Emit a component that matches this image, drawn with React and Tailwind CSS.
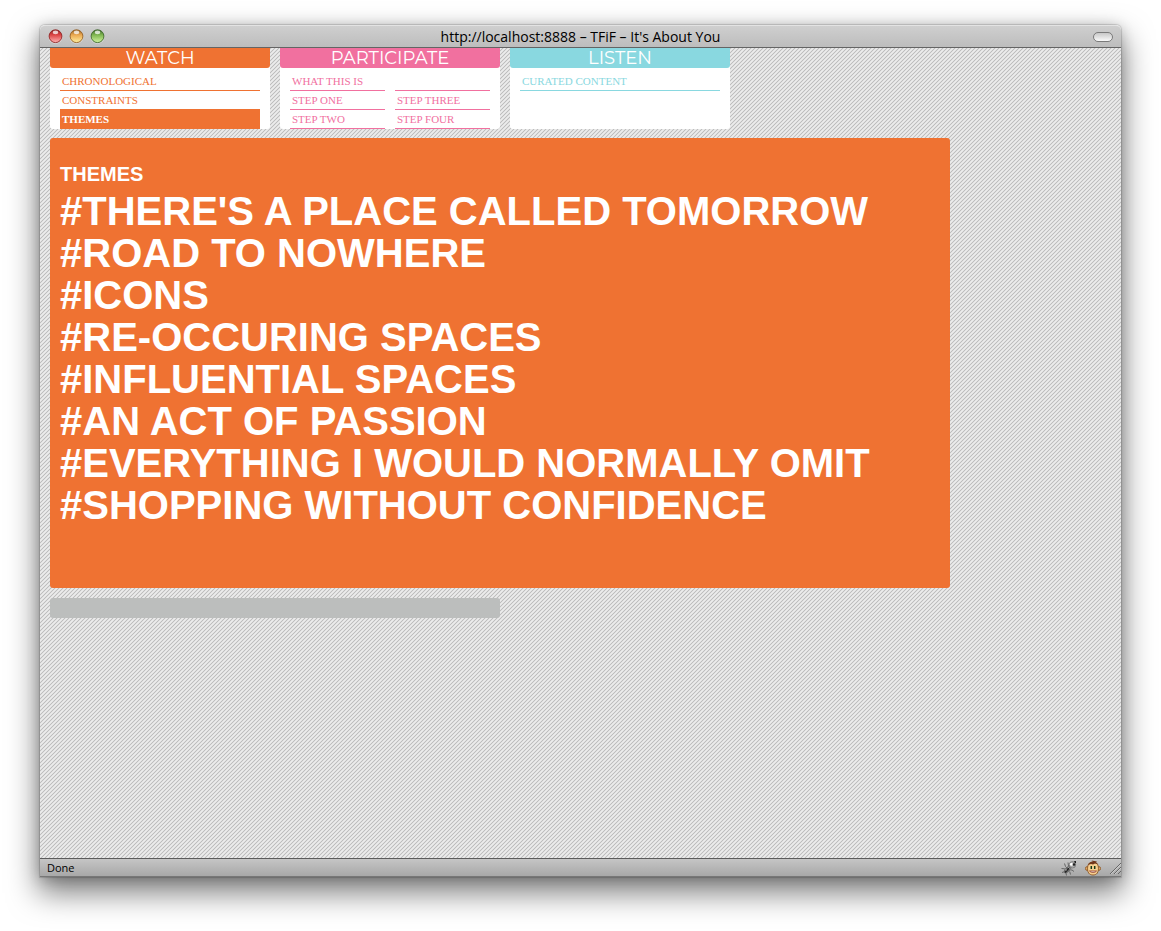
import React from 'react';

const themes = [
  "#THERE'S A PLACE CALLED TOMORROW",
  '#ROAD TO NOWHERE',
  '#ICONS',
  '#RE-OCCURING SPACES',
  '#INFLUENTIAL SPACES',
  '#AN ACT OF PASSION',
  '#EVERYTHING I WOULD NORMALLY OMIT',
  '#SHOPPING WITHOUT CONFIDENCE',
];

function WindowButton({ label, id, edge, dark, light }) {
  return (
    <button type="button" aria-label={label} className="block size-[15px]">
      <svg viewBox="0 0 15 15" className="block size-full">
        <defs>
          <linearGradient id={id} x1="0" y1="0" x2="0" y2="1">
            <stop offset="0" stopColor={edge} />
            <stop offset="0.4" stopColor={dark} />
            <stop offset="1" stopColor={light} />
          </linearGradient>
        </defs>
        <circle cx="7.5" cy="7.9" r="6.9" fill="#f0f0f0" opacity="0.6" />
        <circle cx="7.5" cy="7.2" r="6.4" fill={`url(#${id})`} stroke={edge} strokeWidth="0.9" />
        <ellipse cx="7.5" cy="3.4" rx="2.8" ry="1.8" fill="#fff" opacity="0.75" />
      </svg>
    </button>
  );
}

function Panel({ title, head, children }) {
  return (
    <section className="h-[81px] w-[220px] shrink-0 rounded-b-[3px] bg-white">
      <h2 className={`h-5 rounded-b-[3px] text-center font-['Montserrat','Lato',sans-serif] text-[18px] leading-5 text-white ${head}`}>
        {title}
      </h2>
      {children}
    </section>
  );
}

function Item({ children, className }) {
  return (
    <li>
      <a href="#" className={`block h-[19px] border-b px-0.5 font-['Georgia','Liberation_Serif',serif] text-[11px] leading-[18px] ${className}`}>
        {children}
      </a>
    </li>
  );
}

function Bug() {
  return (
    <svg viewBox="0 0 16 16" className="block size-4" role="img" aria-label="Firebug">
      <path
        d="M0.5 8.5l3 .3 1.5 1M1 12.5l3-1M3.5 3.5l1 3 1.500 1.500M7 2.500l.5 3.500M5.500 15.500l-.5-2.500M9.500 14.500l-.8-3M13 11.500l-2-1.500-1.500 0"
        stroke="#666"
        fill="none"
      />
      <ellipse cx="6.6" cy="9.6" rx="4.6" ry="2.5" transform="rotate(-45 6.6 9.600)" fill="#6c6c6c" />
      <path d="M4 12.500L8.500 7.500" stroke="#222" strokeWidth="1.400" />
      <path d="M4 9.800l2 .2M7 7l2.500 2" stroke="#b5b5b5" strokeWidth="0.800" />
      <circle cx="11.500" cy="4.800" r="3.200" fill="#a9a9a9" stroke="#777" strokeWidth="0.800" />
      <circle cx="10.400" cy="4.300" r="1.500" fill="#fff" />
      <circle cx="13" cy="4.500" r="1.300" fill="#222" />
      <path d="M13 1h2v2h-1z" fill="#222" />
    </svg>
  );
}

function Monkey() {
  return (
    <svg viewBox="0 0 16 16" className="block size-4" role="img" aria-label="Greasemonkey">
      <circle cx="2.400" cy="8.500" r="2" fill="#e0a662" stroke="#8a5526" strokeWidth="0.800" />
      <circle cx="13.600" cy="8.500" r="2" fill="#e0a662" stroke="#8a5526" strokeWidth="0.800" />
      <path
        d="M2.800 6C3.500 3 5.500 2 8 2s4.500 1 5.200 4c.5 3 .2 5.500-1 7.200-1.700 2.400-6.700 2.400-8.400 0C2.500 11.500 2.300 9 2.800 6z"
        fill="#f6cf8f"
        stroke="#8a5526"
        strokeWidth="0.900"
      />
      <path d="M3 5C4 2.500 6 1.700 8 1.800L6.500.5 12 1.500l-1 .8 2 2.200-3-.9-2 1-2-.6z" fill="#70351a" />
      <path d="M6.300 6v3M9.700 6v3" stroke="#143816" strokeWidth="1.500" />
      <path d="M4.500 11h7c-1 1.900-6 1.900-7 0z" fill="#fff" stroke="#8d3424" strokeWidth="0.800" />
    </svg>
  );
}

export default function App() {
  return (
    <div className="flex min-h-screen flex-col bg-white px-10 pt-[25px] pb-[54px]">
      <div className="flex flex-1 flex-col rounded-t-[5px] shadow-[0_14px_30px_2px_rgba(0,0,0,0.5),0_2px_14px_rgba(0,0,0,0.2),0_0_1px_1px_rgba(0,0,0,0.15)]">
        <header className="grid h-[23px] grid-cols-[1fr_auto_1fr] items-center rounded-t-[5px] border-t border-b border-t-[#e3e3e3] border-b-[#646464] bg-linear-to-b from-[#cfcfcf] to-[#bdbdbd] px-2">
          <div className="flex gap-1.5">
            <WindowButton label="Close" id="close" edge="#8d2424" dark="#dc4545" light="#ffb4b4" />
            <WindowButton label="Minimize" id="minimize" edge="#946024" dark="#eba850" light="#fff0a0" />
            <WindowButton label="Zoom" id="zoom" edge="#3e682b" dark="#7fb650" light="#d2f5a0" />
          </div>
          <h1 className="font-['Lucida_Grande','Open_Sans',sans-serif] text-[14px] leading-5 text-black">
            http://localhost:8888 – TFiF – It's About You
          </h1>
          <button type="button" aria-label="Toggle toolbar" className="h-[10px] w-5 justify-self-end rounded-full border border-[#7a7a7a] bg-linear-to-b from-[#c8c8c8] to-[#fafafa]" />
        </header>

        <main className="flex-1 bg-[linear-gradient(135deg,#ececec_18.75%,#e2e2e2_18.75%,#e2e2e2_31.25%,#bebebe_31.25%,#bebebe_43.75%,#e2e2e2_43.75%,#e2e2e2_56.25%,#ececec_56.25%,#ececec_68.75%,#e2e2e2_68.75%,#e2e2e2_81.25%,#bebebe_81.25%)] bg-size-[4px_4px] px-2.5">
          <nav className="flex gap-2.5">
            <Panel title="WATCH" head="bg-[#ef7232]">
              <ul className="px-2.5 pt-1">
                <Item className="border-[#ef7232] text-[#ef7232]">CHRONOLOGICAL</Item>
                <Item className="border-[#ef7232] text-[#ef7232]">CONSTRAINTS</Item>
                <Item className="border-[#ef7232] bg-[#ef7232] font-bold text-white">THEMES</Item>
              </ul>
            </Panel>
            <Panel title="PARTICIPATE" head="bg-[#f1709f]">
              <ul className="grid grid-flow-col grid-cols-2 grid-rows-3 gap-x-2.5 px-2.5 pt-1">
                <Item className="border-[#f1709f] text-[#f1709f]">WHAT THIS IS</Item>
                <Item className="border-[#f1709f] text-[#f1709f]">STEP ONE</Item>
                <Item className="border-[#f1709f] text-[#f1709f]">STEP TWO</Item>
                <li className="border-b border-[#f1709f]" />
                <Item className="border-[#f1709f] text-[#f1709f]">STEP THREE</Item>
                <Item className="border-[#f1709f] text-[#f1709f]">STEP FOUR</Item>
              </ul>
            </Panel>
            <Panel title="LISTEN" head="bg-[#89d8e0]">
              <ul className="px-2.5 pt-1">
                <Item className="border-[#89d8e0] text-[#89d8e0]">CURATED CONTENT</Item>
              </ul>
            </Panel>
          </nav>

          <section className="mt-[9px] min-h-[450px] max-w-[900px] rounded-[3px] bg-[#ef7232] px-2.5 pt-6 pb-[60px] font-['Helvetica_Neue','Liberation_Sans',sans-serif] font-bold text-white">
            <h2 className="mb-1 text-[20px] leading-6">THEMES</h2>
            <ul className="text-[40px] leading-[42px]">
              {themes.map((theme) => (
                <li key={theme}>
                  <a href="#">{theme}</a>
                </li>
              ))}
            </ul>
          </section>
          <div className="mt-2.5 h-5 max-w-[450px] rounded-[3px] bg-[#bcbebd]" />
        </main>

        <footer className="flex h-[19px] items-center border-t border-b border-t-[#5c5c5c] border-b-[#777] bg-linear-to-b from-[#c5c5c5] to-[#a8a8a8] pl-[7px] font-['Lucida_Grande','Open_Sans',sans-serif] text-[11px] leading-4 text-black">
          <span className="flex-1">Done</span>
          <div className="flex items-center gap-2">
            <Bug />
            <Monkey />
            <svg viewBox="0 0 12 12" className="block size-3" aria-hidden="true">
              <path d="M1 12L12 1M5 12l7-7M9 12l3-3" stroke="#666" />
              <path d="M2 12L12 2M6 12l6-6" stroke="#ddd" strokeWidth="0.6" />
            </svg>
          </div>
        </footer>
      </div>
    </div>
  );
}
